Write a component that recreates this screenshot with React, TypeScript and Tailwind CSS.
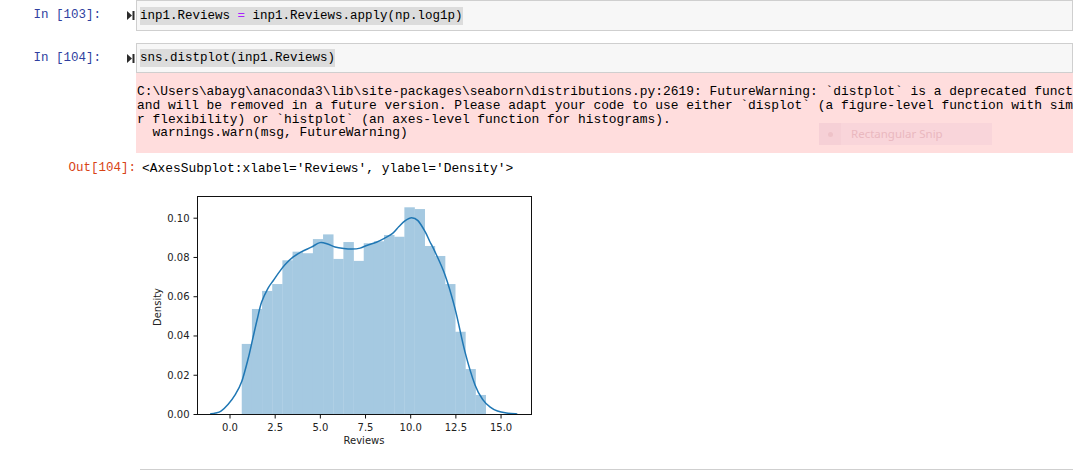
const MONO = { fontFamily: '"Liberation Mono", "DejaVu Sans Mono", monospace' };

// histogram bar heights (density) for 24 bins from 0.65 to 14.15
const bars = [
  0.0357, 0.0535, 0.0627, 0.0662, 0.0783, 0.0827, 0.0819, 0.0891, 0.0915, 0.079, 0.0876, 0.078,
  0.087, 0.088, 0.0912, 0.0903, 0.1053, 0.1044, 0.0856, 0.0805, 0.0662, 0.0419, 0.0229, 0.0097,
];

const kde: [number, number][] = [
  [-1.1, 0], [-0.8, 0.0005], [-0.5, 0.0015], [-0.1, 0.005], [0.3, 0.01], [0.65, 0.0165],
  [1.0, 0.028], [1.25, 0.038], [1.5, 0.048], [1.75, 0.057], [2.1, 0.064], [2.4, 0.068],
  [2.7, 0.072], [3.04, 0.076], [3.5, 0.08], [3.97, 0.0827], [4.5, 0.085], [4.98, 0.0873],
  [5.4, 0.0866], [5.81, 0.0851], [6.3, 0.0843], [6.75, 0.084], [7.2, 0.0845], [7.6, 0.086],
  [8.1, 0.0875], [8.54, 0.0895], [9.0, 0.092], [9.35, 0.0955], [9.7, 0.0985], [10.05, 0.1],
  [10.4, 0.0985], [10.79, 0.093], [11.05, 0.088], [11.34, 0.0827], [11.9, 0.0708],
  [12.45, 0.0538], [13.0, 0.0318], [13.56, 0.0148], [14.0, 0.0072], [14.4, 0.0035],
  [14.8, 0.0015], [15.3, 0.0005], [15.9, 0],
];

const X = (v: number) => 90 + v * 18.07;
const Y = (d: number) => 229 - d * 1963;

function smoothPath(pts: [number, number][]) {
  const p = pts.map(([x, y]) => [X(x), Y(y)]);
  let d = `M${p[0][0]},${p[0][1]}`;
  for (let i = 0; i < p.length - 1; i++) {
    const p0 = p[i - 1] || p[i];
    const p1 = p[i];
    const p2 = p[i + 1];
    const p3 = p[i + 2] || p2;
    const c1x = p1[0] + (p2[0] - p0[0]) / 6;
    const c1y = p1[1] + (p2[1] - p0[1]) / 6;
    const c2x = p2[0] - (p3[0] - p1[0]) / 6;
    const c2y = p2[1] - (p3[1] - p1[1]) / 6;
    d += ` C${c1x},${c1y} ${c2x},${c2y} ${p2[0]},${p2[1]}`;
  }
  return d;
}

function RunIcon() {
  return (
    <svg width="8" height="9" viewBox="0 0 8 9" className="ml-[26px] flex-none">
      <polygon points="0,0 5,4.5 0,9" fill="#2b2b2b" />
      <rect x="5.5" y="0" width="2" height="9" fill="#2b2b2b" />
    </svg>
  );
}

function Distplot() {
  const binW = 13.5 / 24;
  return (
    <svg width="400" height="270" style={{ fontFamily: '"DejaVu Sans", sans-serif' }}>
      {bars.map((h, i) => {
        const x0 = X(0.65 + i * binW);
        const x1 = X(0.65 + (i + 1) * binW);
        return <rect key={i} x={x0} y={Y(h)} width={x1 - x0 + 0.3} height={229 - Y(h)} fill="#a5c9e1" />;
      })}
      <path d={smoothPath(kde)} fill="none" stroke="#1f77b4" strokeWidth="1.5" />
      <rect x="57.5" y="11.5" width="334" height="218" fill="none" stroke="#111" strokeWidth="1" />
      {[0, 0.02, 0.04, 0.06, 0.08, 0.1].map((d) => (
        <g key={d}>
          <line x1="53.5" x2="57.5" y1={Y(d) + 0.5} y2={Y(d) + 0.5} stroke="#111" />
          <text x="49.5" y={Y(d) + 4} textAnchor="end" fontSize="10" fill="#222">
            {d.toFixed(2)}
          </text>
        </g>
      ))}
      {[0, 2.5, 5, 7.5, 10, 12.5, 15].map((v) => (
        <g key={v}>
          <line x1={X(v)} x2={X(v)} y1="229.5" y2="233.5" stroke="#111" />
          <text x={X(v)} y="246" textAnchor="middle" fontSize="10" fill="#222">
            {v.toFixed(1)}
          </text>
        </g>
      ))}
      <text x="224" y="259" textAnchor="middle" fontSize="10" fill="#222">
        Reviews
      </text>
      <text transform="translate(21,122) rotate(-90)" textAnchor="middle" fontSize="10" fill="#222">
        Density
      </text>
    </svg>
  );
}

export default function App() {
  return (
    <div className="relative w-[1073px] h-[471px] overflow-hidden bg-white text-[12.9px]" style={MONO}>
      {/* In [103] */}
      <div className="flex">
        <div className="w-[136px] flex-none flex items-center">
          <span className="w-[101px] text-right text-[#303f9f] text-[12.5px]">In&nbsp;[103]:</span>
          <RunIcon />
        </div>
        <div className="flex-1 h-[31px] border border-[#cfcfcf] bg-[#f7f7f7] flex items-center pl-[3px] whitespace-pre text-[12.5px]">
          <span className="bg-[#dcdcdc] leading-[18px] text-black">
            inp1.Reviews <span className="text-[#aa22ff]">=</span> inp1.Reviews.apply(np.log1p)
          </span>
        </div>
      </div>

      {/* In [104] */}
      <div className="flex mt-[12px]">
        <div className="w-[136px] flex-none flex items-center h-[30px]">
          <span className="w-[101px] text-right text-[#303f9f] text-[12.5px]">In&nbsp;[104]:</span>
          <RunIcon />
        </div>
        <div className="flex-1 min-w-0">
          <div className="h-[30px] border border-[#cfcfcf] bg-[#f7f7f7] flex items-center pl-[3px] whitespace-pre text-[12.5px]">
            <span className="bg-[#dcdcdc] leading-[18px] text-black">sns.distplot(inp1.Reviews)</span>
          </div>
          <div className="h-[80px] bg-[#ffdddd] pt-[12px] pl-[1px] leading-[13.8px] text-black whitespace-pre overflow-hidden">
            <div>C:\Users\abayg\anaconda3\lib\site-packages\seaborn\distributions.py:2619: FutureWarning: `distplot` is a deprecated function</div>
            <div>and will be removed in a future version. Please adapt your code to use either `displot` (a figure-level function with simila</div>
            <div>r flexibility) or `histplot` (an axes-level function for histograms).</div>
            <div>  warnings.warn(msg, FutureWarning)</div>
          </div>
        </div>
      </div>

      {/* Out [104] */}
      <div className="flex mt-[7px] leading-[17px]">
        <span className="w-[136px] flex-none text-right text-[#d84315] text-[12.5px]">Out[104]:</span>
        <span className="pl-[6px] text-black whitespace-pre">&lt;AxesSubplot:xlabel='Reviews', ylabel='Density'&gt;</span>
      </div>

      <div className="mt-[8px] ml-[140px]">
        <Distplot />
      </div>

      <div className="mt-[14px] ml-[140px] border-t border-[#cfcfcf]" />

      {/* ghost snipping tooltip */}
      <div
        className="absolute left-[819px] top-[123px] w-[173px] h-[22px] bg-[#f9d5da] flex items-center text-[11.5px] text-[#eab8bf]"
        style={{ fontFamily: '"Noto Sans", sans-serif' }}
      >
        <div className="w-[22px] h-[22px] bg-[#f6d0d6] flex items-center justify-center">
          <div className="w-[5px] h-[5px] rounded-full bg-[#eec2c8]" />
        </div>
        <span className="ml-[10px]">Rectangular Snip</span>
      </div>
    </div>
  );
}
